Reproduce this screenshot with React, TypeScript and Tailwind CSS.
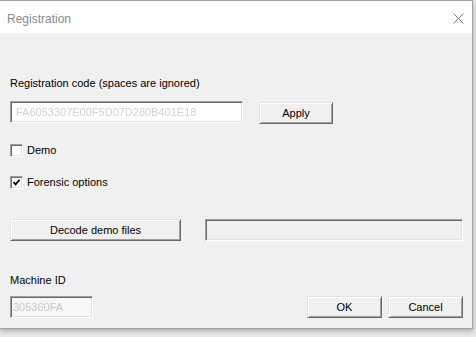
import React from "react";

const raised =
  "border border-t-[#e3e3e3] border-l-[#e3e3e3] border-b-[#696969] border-r-[#696969] shadow-[inset_1px_1px_0_#ffffff,inset_-1px_-1px_0_#a0a0a0]";
const sunken =
  "border border-t-[#a0a0a0] border-l-[#a0a0a0] border-b-white border-r-white shadow-[inset_1px_1px_0_#696969,inset_-1px_-1px_0_#e3e3e3]";

const Button = ({ label, className = "" }: { label: string; className?: string }) => (
  <button
    type="button"
    className={`h-[22px] bg-[#f0f0f0] text-[11px] leading-none text-black ${raised} ${className}`}
  >
    {label}
  </button>
);

const Checkbox = ({ label, checked }: { label: string; checked?: boolean }) => (
  <div className="flex h-[13px] items-center">
    <div className={`flex h-[13px] w-[13px] items-center justify-center bg-white ${sunken}`}>
      {checked && (
        <svg width="9" height="9" viewBox="0 0 9 9">
          <path d="M1.5 4.2 L3.6 6.4 L7.6 1.8" fill="none" stroke="#000" strokeWidth="1.7" />
        </svg>
      )}
    </div>
    <span className="ml-[4px] leading-[13px]">{label}</span>
  </div>
);

export default function App() {
  return (
    <div className="h-[337px] w-[476px] overflow-hidden bg-[#e9e9e9] font-['Liberation_Sans',Arial,sans-serif] text-[11px] text-black">
      <div className="flex h-[329px] w-[473px] flex-col border border-l-0 border-[#a3a3a3] bg-[#f0f0f0] shadow-[0_2px_5px_rgba(0,0,0,0.28)]">
        {/* title bar */}
        <div className="flex h-[32px] justify-between bg-white pl-[7px] pr-[8px]">
          <span className="mt-[10px] text-[12px] leading-[16px] text-[#8a8a8a]">Registration</span>
          <svg className="mt-[12px]" width="11" height="11" viewBox="0 0 11 11">
            <path d="M0.5 0.5 L10.5 10.5 M10.5 0.5 L0.5 10.5" stroke="#7a7a7a" strokeWidth="1" />
          </svg>
        </div>

        <div className="flex flex-1 flex-col pl-[10px] pr-[9px]">
          <div className="mt-[44px] leading-[13px]">Registration code (spaces are ignored)</div>

          <div className="mt-[11px] flex items-start">
            <div className={`flex h-[22px] w-[233px] items-center bg-white pl-[5px] ${sunken}`}>
              <span className="text-[#d2d2d2] blur-[0.6px]">FA6053307E00F5D07D280B401E18</span>
            </div>
            <Button label="Apply" className="ml-[16px] mt-[1px] w-[74px]" />
          </div>

          <div className="mt-[20px]">
            <Checkbox label="Demo" />
          </div>
          <div className="mt-[19px]">
            <Checkbox label="Forensic options" checked />
          </div>

          <div className="mt-[30px] flex">
            <Button label="Decode demo files" className="w-[171px]" />
            <div className={`ml-[24px] h-[22px] flex-1 bg-[#f0f0f0] ${sunken}`} />
          </div>

          <div className="mt-[33px] flex items-end">
            <div className="flex flex-col">
              <span className="leading-[13px]">Machine ID</span>
              <div className={`mt-[9px] flex h-[22px] w-[83px] items-center bg-[#f7f7f7] pl-[2px] ${sunken}`}>
                <span className="text-[#c6c6c6] blur-[0.6px]">305360FA</span>
              </div>
            </div>
            <Button label="OK" className="ml-auto w-[75px]" />
            <Button label="Cancel" className="ml-[6px] w-[75px]" />
          </div>
        </div>
      </div>
    </div>
  );
}
